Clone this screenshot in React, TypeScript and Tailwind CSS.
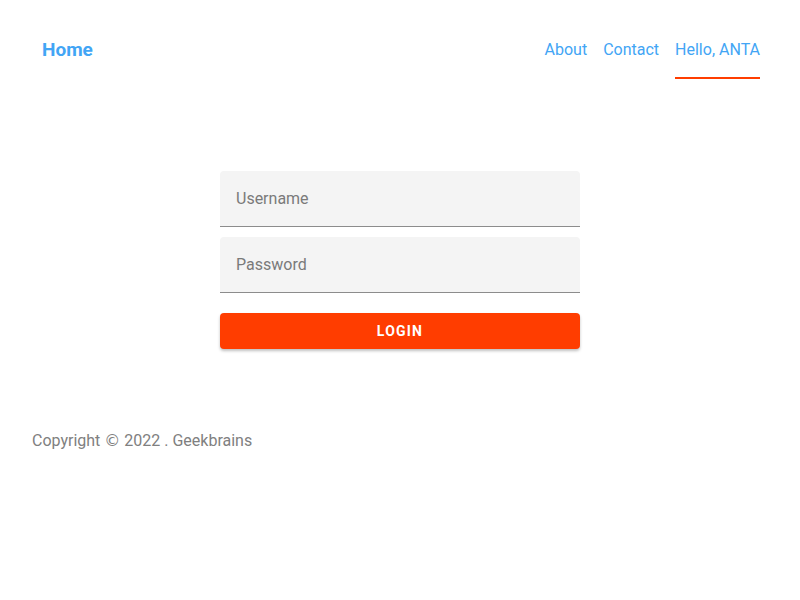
import React, { useState } from "react";

const font = { fontFamily: "Roboto, 'Liberation Sans', sans-serif" };

const App: React.FC = () => {
  const [username, setUsername] = useState<string>("");
  const [password, setPassword] = useState<string>("");

  return (
    <div className="min-h-screen bg-white flex flex-col" style={font}>
      {/* Header */}
      <header className="flex justify-between items-start px-10 pt-[38px]">
        <a className="text-[19px] font-bold leading-6 text-[#42a5f5] pl-[2px]">Home</a>

        <nav className="flex gap-4 text-[16px] leading-6 text-[#42a5f5]">
          <a className="h-[41px]">About</a>
          <a className="h-[41px]">Contact</a>
          <a className="h-[41px] border-b-2 border-[#ff3d00]">Hello, ANTA</a>
        </nav>
      </header>

      {/* Login form */}
      <main className="flex justify-center pt-[92px]">
        <form className="w-[360px] flex flex-col gap-[10px]" onSubmit={(e) => e.preventDefault()}>
          <input
            type="text"
            placeholder="Username"
            value={username}
            onChange={(e) => setUsername(e.target.value)}
            className="h-14 px-4 bg-[#f4f4f4] rounded-t border-b border-[#8c8c8c] text-[16px] text-gray-800 placeholder:text-[#7a7a7a] outline-none"
          />
          <input
            type="password"
            placeholder="Password"
            value={password}
            onChange={(e) => setPassword(e.target.value)}
            className="h-14 px-4 bg-[#f4f4f4] rounded-t border-b border-[#8c8c8c] text-[16px] text-gray-800 placeholder:text-[#7a7a7a] outline-none"
          />
          <button
            type="submit"
            className="mt-[10px] h-9 rounded bg-[#ff3d00] text-white text-[14px] font-bold tracking-[1.2px] uppercase shadow-[0_2px_3px_rgba(0,0,0,0.25)]"
          >
            Login
          </button>
        </form>
      </main>

      {/* Footer */}
      <footer className="px-8 pt-[80px] text-[16px] leading-6 text-[#808080]">
        Copyright <span style={{ fontFamily: "'DejaVu Sans', sans-serif" }}>©</span> 2022 . Geekbrains
      </footer>
    </div>
  );
};

export default App;
